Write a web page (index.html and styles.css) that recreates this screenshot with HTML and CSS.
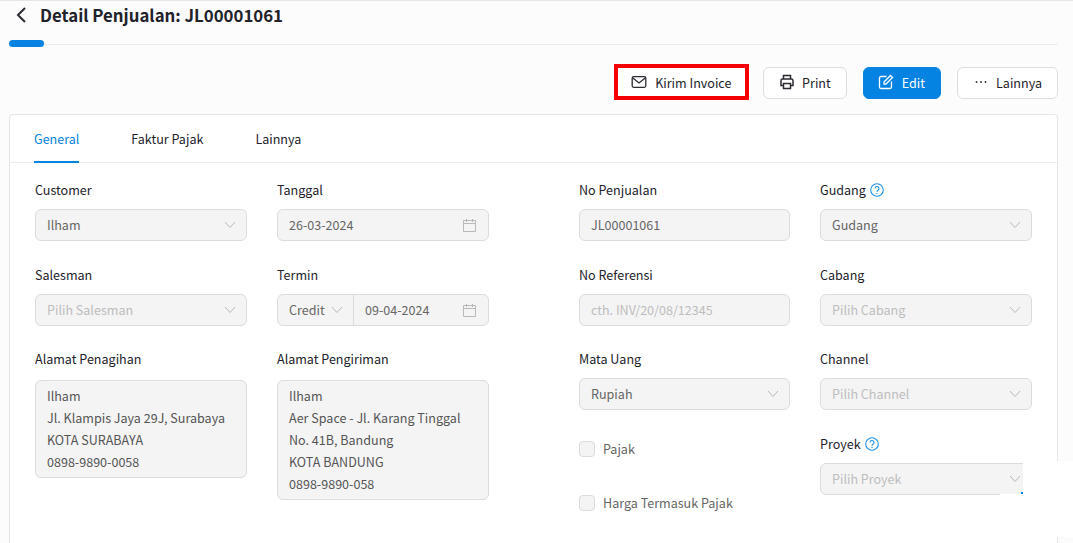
FILE: index.html
```html
<!DOCTYPE html>
<html lang="id">
<head>
<meta charset="utf-8">
<title>Detail Penjualan</title>
<link rel="stylesheet" href="styles.css">
</head>
<body>
<main class="page">
  <header class="title-row">
    <svg class="back" width="14" height="18" viewBox="0 0 14 18"><path d="M11 2 4 9l7 7" fill="none" stroke="#2b2b33" stroke-width="2"/></svg>
    <h1>Detail Penjualan: JL00001061</h1>
  </header>
  <div class="progress"><span class="progress-fill"></span></div>
  <div class="actions">
    <button class="btn btn-marked">
      <svg width="16" height="16" viewBox="0 0 16 16" fill="none" stroke="#2b2b33" stroke-width="1.300"><rect x="1.200" y="2.700" width="13.600" height="10.600" rx="1.500"/><path d="m1.800 4 6.200 5 6.200-5"/></svg>
      Kirim Invoice
    </button>
    <button class="btn">
      <svg width="16" height="16" viewBox="0 0 16 16" fill="none" stroke="#2b2b33" stroke-width="1.500"><path d="M4.500 5V1.500h7V5M4.500 11.500H2V6.500a1.500 1.500 0 0 1 1.500-1.500h9A1.500 1.500 0 0 1 14 6.500v5h-2.500"/><rect x="4.500" y="9.500" width="7" height="5"/></svg>
      Print
    </button>
    <button class="btn btn-primary">
      <svg width="16" height="16" viewBox="0 0 16 16" fill="none" stroke="#fff" stroke-width="1.300"><path d="M8.500 2.500H3A1.500 1.500 0 0 0 1.500 4v9A1.500 1.500 0 0 0 3 14.500h9a1.500 1.500 0 0 0 1.500-1.500V7.500"/><path d="M6 8 12.500 1.500l2 2L8 10H6z"/></svg>
      Edit
    </button>
    <button class="btn">
      <svg width="16" height="16" viewBox="0 0 16 16" fill="#2b2b33"><circle cx="3.500" cy="8" r=".9"/><circle cx="8" cy="8" r=".9"/><circle cx="12.500" cy="8" r=".9"/></svg>
      Lainnya
    </button>
  </div>
  <section class="card">
    <nav class="tabs">
      <span class="tab tab-active">General</span>
      <span class="tab">Faktur Pajak</span>
      <span class="tab">Lainnya</span>
    </nav>
    <div class="form">
      <div class="group">
        <div class="col">
          <div class="field">
            <label>Customer</label>
            <div class="input"><span>Ilham</span><svg class="chev" width="12" height="8" viewBox="0 0 12 8"><path d="M1 1l5 5.500L11 1" /></svg></div>
          </div>
          <div class="field">
            <label>Salesman</label>
            <div class="input ph"><span>Pilih Salesman</span><svg class="chev" width="12" height="8" viewBox="0 0 12 8"><path d="M1 1l5 5.500L11 1" /></svg></div>
          </div>
          <div class="field field-tight">
            <label>Alamat Penagihan</label>
            <div class="area"><p>Ilham</p><p>Jl. Klampis Jaya 29J, Surabaya</p><p>KOTA SURABAYA</p><p>0898-9890-0058</p></div>
          </div>
        </div>
        <div class="col">
          <div class="field">
            <label>Tanggal</label>
            <div class="input"><span>26-03-2024</span><svg class="cal" width="13" height="13" viewBox="0 0 13 13"><path d="M.5 1.500h12v11H.5zM.5 4.500h12M3.500 0v3M9.500 0v3"/></svg></div>
          </div>
          <div class="field">
            <label>Termin</label>
            <div class="input input-split">
              <div class="split-left"><span>Credit</span><svg class="chev" width="12" height="8" viewBox="0 0 12 8"><path d="M1 1l5 5.500L11 1" /></svg></div>
              <div class="split-right"><span>09-04-2024</span><svg class="cal" width="13" height="13" viewBox="0 0 13 13"><path d="M.5 1.500h12v11H.5zM.5 4.500h12M3.500 0v3M9.500 0v3"/></svg></div>
            </div>
          </div>
          <div class="field field-tight">
            <label>Alamat Pengiriman</label>
            <div class="area"><p>Ilham</p><p>Aer Space - Jl. Karang Tinggal</p><p>No. 41B, Bandung</p><p>KOTA BANDUNG</p><p>0898-9890-058</p></div>
          </div>
        </div>
      </div>
      <div class="group">
        <div class="col col-narrow">
          <div class="field">
            <label>No Penjualan</label>
            <div class="input"><span>JL00001061</span></div>
          </div>
          <div class="field">
            <label>No Referensi</label>
            <div class="input ph"><span>cth. INV/20/08/12345</span></div>
          </div>
          <div class="field field-select">
            <label>Mata Uang</label>
            <div class="input"><span>Rupiah</span><svg class="chev" width="12" height="8" viewBox="0 0 12 8"><path d="M1 1l5 5.500L11 1" /></svg></div>
          </div>
          <div class="check check-first"><span class="box"></span><span class="check-text">Pajak</span></div>
          <div class="check"><span class="box"></span><span class="check-text">Harga Termasuk Pajak</span></div>
        </div>
        <div class="col">
          <div class="field">
            <label>Gudang <svg class="help" width="14" height="14" viewBox="0 0 14 14"><circle cx="7" cy="7" r="6.300"/><path d="M5 5.500a2 2 0 1 1 3 1.700c-.7.400-1 .8-1 1.500"/><path d="M7 10v1"/></svg></label>
            <div class="input"><span>Gudang</span><svg class="chev" width="12" height="8" viewBox="0 0 12 8"><path d="M1 1l5 5.500L11 1" /></svg></div>
          </div>
          <div class="field">
            <label>Cabang</label>
            <div class="input ph"><span>Pilih Cabang</span><svg class="chev" width="12" height="8" viewBox="0 0 12 8"><path d="M1 1l5 5.500L11 1" /></svg></div>
          </div>
          <div class="field field-select">
            <label>Channel</label>
            <div class="input ph"><span>Pilih Channel</span><svg class="chev" width="12" height="8" viewBox="0 0 12 8"><path d="M1 1l5 5.500L11 1" /></svg></div>
          </div>
          <div class="field">
            <label>Proyek <svg class="help" width="14" height="14" viewBox="0 0 14 14"><circle cx="7" cy="7" r="6.300"/><path d="M5 5.500a2 2 0 1 1 3 1.700c-.7.400-1 .8-1 1.500"/><path d="M7 10v1"/></svg></label>
            <div class="input ph"><span>Pilih Proyek</span><svg class="chev" width="12" height="8" viewBox="0 0 12 8"><path d="M1 1l5 5.500L11 1" /></svg></div>
          </div>
        </div>
      </div>
    </div>
  </section>
</main>
<div class="patch"></div>
</body>
</html>
```
FILE: styles.css
```css
* { box-sizing: border-box; }
html, body { margin: 0; height: 543px; overflow: hidden; }
body {
  background: #fcfcfc;
  color: #22222a;
  font-family: "Noto Sans CJK JP", "Noto Sans", sans-serif;
  font-size: 12.550px;
  border-top: 1px solid #e6e6e6;
  position: relative;
}
.page { padding: 0 15px 0 9px; }
.title-row { display: flex; align-items: center; height: 28px; padding-left: 5px; gap: 12px; }
.back { flex: none; }
h1 { margin: -1px 0 0; font-size: 16.800px; line-height: 28px; font-weight: 700; color: #22222a; }
.progress { position: relative; height: 1px; margin-top: 15px; background: #ebebeb; }
.progress-fill { position: absolute; left: 0; top: -4px; width: 35px; height: 7px; border-radius: 4px; background: #0583e2; }
.actions { display: flex; justify-content: flex-end; align-items: center; gap: 16px; margin-top: 20px; height: 36px; }
.btn {
  display: flex; align-items: center; justify-content: center; gap: 7.300px;
  height: 32px; padding: 0 15px 2px;
  background: #fff; border: 1px solid #dedede; border-radius: 6px;
  font: inherit; color: #22222a;
}
.btn-marked { height: 36px; width: 135px; padding: 0; border: 4px solid #f40000; border-radius: 0; margin: -2px -2px 0 0; gap: 8px; }
.btn-primary { width: 78px; padding: 0 0 2px; background: #0583e2; border-color: #0583e2; color: #fff; }
.card {
  margin-top: 13px; height: 440px;
  background: #fff; border: 1px solid #e6e6e6; border-radius: 4px 4px 0 0;
}
.tabs { display: flex; gap: 52px; height: 48px; padding-left: 24px; border-bottom: 1px solid #ececec; }
.tab { height: 48px; line-height: 48px; }
.tab-active { color: #0583e2; border-bottom: 2px solid #0583e2; }
.form { display: flex; gap: 90px; padding: 17px 0 0 25px; }
.group { display: flex; gap: 30px; }
.col { width: 212px; display: flex; flex-direction: column; }
.col-narrow { width: 211px; }
.field { margin-bottom: 24px; }
.field-select { margin-top: -1px; }
.field label { display: flex; align-items: center; gap: 4px; height: 20px; line-height: 20px; margin-bottom: 9px; }
.field-tight { margin-top: -1px; }
.field-tight label { margin-bottom: 11px; }
.input {
  display: flex; align-items: center; justify-content: space-between;
  height: 32px; padding: 0 10px 0 11px;
  background: #f4f4f4; border: 1px solid #dcdcdc; border-radius: 6px;
  color: #666;
}
.input span { margin-top: -2px; }
.ph { color: #bdbdbd; }
.chev { fill: none; stroke: #b8b8b8; stroke-width: 1; flex: none; }
.cal { fill: none; stroke: #b8b8b8; stroke-width: 1; flex: none; margin-right: 2px; }
.help { fill: none; stroke: #1c8fe6; stroke-width: 1.100; }
.input-split { padding: 0; }
.split-left { display: flex; align-items: center; justify-content: space-between; width: 76px; height: 100%; padding: 0 10px 0 11px; border-right: 1px solid #dcdcdc; flex: none; }
.split-right { display: flex; align-items: center; justify-content: space-between; flex: 1; padding: 0 10px 0 11px; }
.area {
  padding: 4px 11px;
  background: #f4f4f4; border: 1px solid #dcdcdc; border-radius: 6px;
  color: #555; line-height: 22px;
}
.area p { margin: 0; }
.check { display: flex; align-items: center; gap: 8px; height: 16px; color: #666; margin-bottom: 38px; }
.check-first { margin-top: 7px; }
.check-text { margin-top: -2px; }
.box { width: 16px; height: 16px; background: #f4f4f4; border: 1px solid #dcdcdc; border-radius: 4px; flex: none; }
.patch { position: absolute; left: 1023px; top: 460px; width: 50px; height: 76px; background: #fff; }
.patch::before { content: ""; position: absolute; left: -23px; top: 33px; width: 23px; height: 3px; background: #fff; }
.patch::after { content: ""; position: absolute; left: -2px; top: 31px; width: 2px; height: 2px; background: #0583e2; }
```
